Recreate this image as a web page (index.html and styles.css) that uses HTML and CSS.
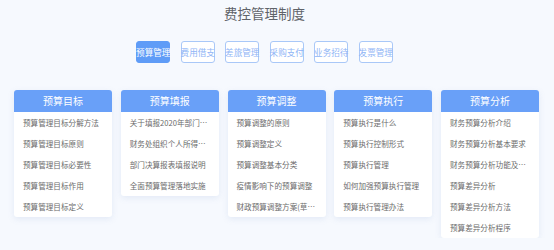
FILE: index.html
```html
<!DOCTYPE html>
<html>
<head>
	<meta charset="utf-8">
	<title>费控管理制度</title>
	<link rel="stylesheet" href="styles.css">
</head>
<body>
	<div id="principal">
		<h1 id="titulo">费控管理制度</h1>
		<ul id="abas">
			<li class="aba ativa">预算管理</li>
			<li class="aba">费用借支</li>
			<li class="aba">差旅管理</li>
			<li class="aba">采购支付</li>
			<li class="aba">业务招待</li>
			<li class="aba">发票管理</li>
		</ul>
		<div id="cartoes">
			<div class="cartao">
				<h2 class="cartao-titulo">预算目标</h2>
				<ul class="cartao-lista">
					<li>预算管理目标分解方法</li>
					<li>预算管理目标原则</li>
					<li>预算管理目标必要性</li>
					<li>预算管理目标作用</li>
					<li>预算管理目标定义</li>
				</ul>
			</div>
			<div class="cartao">
				<h2 class="cartao-titulo">预算填报</h2>
				<ul class="cartao-lista">
					<li>关于填报2020年部门预算的通知</li>
					<li>财务处组织个人所得税汇算清缴</li>
					<li>部门决算报表填报说明</li>
					<li>全面预算管理落地实施</li>
				</ul>
			</div>
			<div class="cartao">
				<h2 class="cartao-titulo">预算调整</h2>
				<ul class="cartao-lista">
					<li>预算调整的原则</li>
					<li>预算调整定义</li>
					<li>预算调整基本分类</li>
					<li>疫情影响下的预算调整</li>
					<li>财政预算调整方案(草案)</li>
				</ul>
			</div>
			<div class="cartao">
				<h2 class="cartao-titulo">预算执行</h2>
				<ul class="cartao-lista">
					<li>预算执行是什么</li>
					<li>预算执行控制形式</li>
					<li>预算执行管理</li>
					<li>如何加强预算执行管理</li>
					<li>预算执行管理办法</li>
				</ul>
			</div>
			<div class="cartao">
				<h2 class="cartao-titulo">预算分析</h2>
				<ul class="cartao-lista">
					<li>财务预算分析介绍</li>
					<li>财务预算分析基本要求</li>
					<li>财务预算分析功能及作用</li>
					<li>预算差异分析</li>
					<li>预算差异分析方法</li>
					<li>预算差异分析程序</li>
				</ul>
			</div>
		</div>
	</div>
</body>
</html>
```

FILE: styles.css
```css
* {
	font-family: "Noto Sans CJK SC", "Liberation Sans", sans-serif;
	font-weight: 400;
	box-sizing: border-box;
}

body {
	margin: 0;
	background-color: #f6f9fe;
}

#principal {
	padding: 3px 14px 0 14px;
}

/* o cabeçalho fica um pouco à esquerda do centro dos cartões */
#titulo {
	margin: 0;
	padding: 0 25px 0 0;
	text-align: center;
	font-size: 13.5px;
	line-height: 20px;
	color: #5f6369;
}

#abas {
	display: flex;
	justify-content: center;
	gap: 10.5px;
	list-style: none;
	margin: 18px 0 0 0;
	padding: 0 25px 0 0;
}

.aba {
	width: 34px;
	min-width: 0;
	flex-shrink: 0;
	height: 22px;
	line-height: 20px;
	text-align: center;
	font-size: 8.6px;
	white-space: nowrap;
	color: #8fb5f6;
	background-color: #fff;
	border: 1px solid #a9c8f8;
	border-radius: 3px;
	display: flex;
	justify-content: center;
}

.aba.ativa {
	background-color: #5f9cf7;
	border-color: #5f9cf7;
	color: #fff;
}

#cartoes {
	display: flex;
	align-items: flex-start;
	gap: 8.75px;
	margin-top: 27px;
}

.cartao {
	width: 98px;
	background-color: #fff;
	border-radius: 3px;
	box-shadow: 0 2px 6px rgba(120, 150, 200, 0.15);
}

.cartao-titulo {
	margin: 0;
	height: 22px;
	line-height: 22px;
	text-align: center;
	font-size: 10px;
	color: #fff;
	background-color: #69a0f8;
	border-radius: 3px 3px 0 0;
}

.cartao-lista {
	list-style: none;
	margin: 0;
	padding: 0;
}

.cartao-lista li {
	height: 21px;
	line-height: 21px;
	padding: 0 10px 0 9px;
	font-size: 7.6px;
	color: #6b6b6b;
	white-space: nowrap;
	overflow: hidden;
	text-overflow: ellipsis;
}
```
